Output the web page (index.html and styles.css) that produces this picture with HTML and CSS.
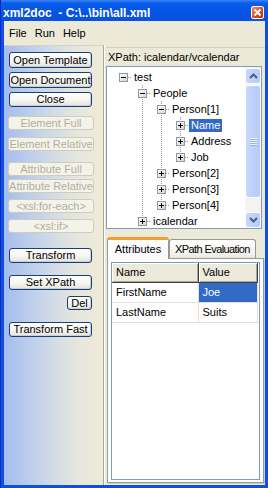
FILE: index.html
```html
<!DOCTYPE html>
<html lang="en">
<head>
    <meta charset="UTF-8">
    <title>xml2doc</title>
    <link rel="stylesheet" href="styles.css">
</head>
<body>
    <div class="window">
        <div class="titlebar">
            <span class="title">xml2doc  - C:\..\bin\all.xml</span>
            <span class="close-btn">
                <svg width="11" height="11" viewBox="0 0 11 11"><path d="M2.5 2.5 L8.5 8.5 M8.5 2.5 L2.5 8.5" stroke="#fff" stroke-width="1.8" fill="none"/></svg>
            </span>
        </div>

        <div class="frame">
            <nav class="menubar">
                <span>File</span>
                <span>Run</span>
                <span>Help</span>
            </nav>

            <div class="client">
                <div class="toolpanel">
                    <button class="btn tall">Open Template</button>
                    <button class="btn tall gap-4">Open Document</button>
                    <button class="btn gap-4">Close</button>
                    <button class="btn off gap-9" disabled>Element Full</button>
                    <button class="btn off gap-7" disabled>Element Relative</button>
                    <button class="btn off gap-11" disabled>Attribute Full</button>
                    <button class="btn off gap-3" disabled>Attribute Relative</button>
                    <button class="btn off gap-6" disabled>&lt;xsl:for-each&gt;</button>
                    <button class="btn off gap-6" disabled>&lt;xsl:if&gt;</button>
                    <button class="btn gap-15">Transform</button>
                    <button class="btn gap-12">Set XPath</button>
                    <button class="btn small gap-6">Del</button>
                    <button class="btn gap-12">Transform Fast</button>
                </div>

                <div class="splitter"></div>

                <div class="main">
                    <div class="xpath-bar">XPath: icalendar/vcalendar</div>

                    <div class="tree">
                        <div class="tree-view">
                            <ul class="nodes">
                                <li class="node root">
                                    <div class="row"><span class="exp"></span><span class="dash"></span><span class="label">test</span></div>
                                    <ul class="nodes">
                                        <li class="node">
                                            <div class="row"><span class="exp"></span><span class="dash"></span><span class="label">People</span></div>
                                            <ul class="nodes">
                                                <li class="node">
                                                    <div class="row"><span class="exp"></span><span class="dash"></span><span class="label">Person[1]</span></div>
                                                    <ul class="nodes">
                                                        <li class="node">
                                                            <div class="row"><span class="exp plus"></span><span class="dash"></span><span class="label selected">Name</span></div>
                                                        </li>
                                                        <li class="node">
                                                            <div class="row"><span class="exp plus"></span><span class="dash"></span><span class="label">Address</span></div>
                                                        </li>
                                                        <li class="node last">
                                                            <div class="row"><span class="exp plus"></span><span class="dash"></span><span class="label">Job</span></div>
                                                        </li>
                                                    </ul>
                                                </li>
                                                <li class="node">
                                                    <div class="row"><span class="exp plus"></span><span class="dash"></span><span class="label">Person[2]</span></div>
                                                </li>
                                                <li class="node">
                                                    <div class="row"><span class="exp plus"></span><span class="dash"></span><span class="label">Person[3]</span></div>
                                                </li>
                                                <li class="node last">
                                                    <div class="row"><span class="exp plus"></span><span class="dash"></span><span class="label">Person[4]</span></div>
                                                </li>
                                            </ul>
                                        </li>
                                        <li class="node last">
                                            <div class="row"><span class="exp plus"></span><span class="dash"></span><span class="label">icalendar</span></div>
                                        </li>
                                    </ul>
                                </li>
                            </ul>
                        </div>

                        <div class="vscroll">
                            <span class="sb-btn">
                                <svg width="9" height="6" viewBox="0 0 9 6"><path d="M1 5 L4.5 1.5 L8 5" stroke="#4d6185" stroke-width="2" fill="none"/></svg>
                            </span>
                            <span class="sb-thumb"></span>
                            <span class="sb-track"></span>
                            <span class="sb-btn">
                                <svg width="9" height="6" viewBox="0 0 9 6"><path d="M1 1 L4.5 4.5 L8 1" stroke="#4d6185" stroke-width="2" fill="none"/></svg>
                            </span>
                        </div>
                    </div>

                    <div class="tabs">
                        <span class="tab active">Attributes</span>
                        <span class="tab eval">XPath Evaluation</span>
                    </div>

                    <div class="tab-panel">
                        <div class="listview">
                            <table>
                                <thead>
                                    <tr><th class="col-name">Name</th><th class="col-value">Value</th><th class="col-fill"></th></tr>
                                </thead>
                                <tbody>
                                    <tr><td>FirstName</td><td class="picked">Joe</td><td></td></tr>
                                    <tr><td>LastName</td><td>Suits</td><td></td></tr>
                                </tbody>
                            </table>
                        </div>
                    </div>
                </div>
            </div>
        </div>
    </div>
</body>
</html>
```

FILE: styles.css
```css
body {
    margin: 0;
    width: 268px;
    height: 488px;
    overflow: hidden;
    font-family: "Liberation Sans", Arial, sans-serif;
    font-size: 11px;
    color: #000;
}

.window {
    height: 488px;
    display: flex;
    flex-direction: column;
    background: #0a50e4;
    border-left: 1px solid #0028b8;
    box-sizing: border-box;
}

/* title bar */
.titlebar {
    height: 21px;
    flex: none;
    display: flex;
    align-items: center;
    justify-content: space-between;
    padding: 4px 4px 0 2px;
    box-sizing: border-box;
    background: linear-gradient(#3a86f7, #0b5ce9 3px, #0454e6 60%, #0a51de);
    color: #fff;
    font-weight: bold;
    font-size: 12px;
    white-space: pre;
}

.close-btn {
    width: 13px;
    height: 13px;
    box-sizing: border-box;
    border: 1px solid #fff;
    border-radius: 2px;
    background: linear-gradient(135deg, #f0906c, #d8461e 60%, #c33a14);
    display: flex;
    align-items: center;
    justify-content: center;
}

.close-btn svg {
    display: block;
}

.frame {
    flex: 1;
    display: flex;
    flex-direction: column;
    padding: 0 3px 3px 3px;
}

/* menu */
.menubar {
    height: 24px;
    flex: none;
    display: flex;
    align-items: center;
    padding-left: 1px;
    background: #ece9d8;
}

.menubar span {
    padding: 0 4px;
}

.client {
    flex: 1;
    display: flex;
    background: #ece9d8;
}

/* left tool panel */
.toolpanel {
    width: 100px;
    display: flex;
    flex-direction: column;
    align-items: flex-start;
    padding-top: 6px;
    box-sizing: border-box;
    border-top: 1px solid #d8d4c4;
    border-right: 1px solid #aca899;
    background: linear-gradient(to right, #a4bcee 0%, #b9cbed 22%, #d3dce6 50%, #e6e6dc 75%, #f0ebd8 100%);
}

.btn {
    display: block;
    width: 83px;
    height: 15px;
    margin-left: 5px;
    padding: 0;
    box-sizing: border-box;
    font-family: inherit;
    font-size: 11px;
    line-height: 13px;
    color: #000;
    border: 1px solid #1c3f73;
    border-radius: 3px;
    background: linear-gradient(#ffffff, #f6f5f1 55%, #e4e2da);
    box-shadow: inset -1px -1px 0 #c5cedb;
    white-space: nowrap;
}

.btn.tall {
    height: 16px;
}

.btn.off {
    width: 86px;
    height: 14px;
    margin-left: 4px;
    color: #b1ae9f;
    border-color: #cfccbd;
    background: #f4f3ea;
    box-shadow: none;
}

.btn.small {
    width: 25px;
    height: 14px;
    margin-left: 63px;
}

.gap-3 { margin-top: 3px; }
.gap-4 { margin-top: 4px; }
.gap-6 { margin-top: 6px; }
.gap-7 { margin-top: 7px; }
.gap-9 { margin-top: 9px; }
.gap-11 { margin-top: 11px; }
.gap-12 { margin-top: 12px; }
.gap-15 { margin-top: 15px; }

.splitter {
    width: 2px;
    border-left: 1px solid #fff;
    box-sizing: border-box;
}

/* right side */
.main {
    flex: 1;
    min-width: 0;
    display: flex;
    flex-direction: column;
}

.xpath-bar {
    height: 19px;
    margin-top: 2px;
    line-height: 18px;
    padding-left: 2px;
    border-top: 1px solid #d6d2c2;
    box-sizing: border-box;
    white-space: nowrap;
}

.tree {
    height: 163px;
    margin-right: 3px;
    display: flex;
    box-sizing: border-box;
    border: 1px solid #7f9db9;
    background: #fff;
}

.tree-view {
    flex: 1;
    padding: 2px 0 0 12px;
    overflow: hidden;
}

.nodes {
    list-style: none;
    margin: 0;
    padding: 0;
}

.nodes .nodes {
    padding-left: 19px;
}

.node {
    background: repeating-linear-gradient(to bottom, #9a9a9a 0 1px, transparent 1px 2px) 4px 0 / 1px 100% no-repeat;
}

.node.last {
    background-size: 1px 8px;
}

.node.root {
    background: none;
}

.row {
    height: 16px;
    display: flex;
    align-items: center;
    white-space: nowrap;
}

.exp {
    width: 9px;
    height: 9px;
    flex: none;
    box-sizing: border-box;
    border: 1px solid #8e99a6;
    background:
        linear-gradient(#000, #000) center / 5px 1px no-repeat,
        linear-gradient(135deg, #ffffff, #d8d6cc);
}

.exp.plus {
    background:
        linear-gradient(#000, #000) center / 5px 1px no-repeat,
        linear-gradient(#000, #000) center / 1px 5px no-repeat,
        linear-gradient(135deg, #ffffff, #d8d6cc);
}

.dash {
    width: 4px;
    height: 1px;
    flex: none;
    background: repeating-linear-gradient(to right, #9a9a9a 0 1px, transparent 1px 2px);
}

.label {
    height: 13px;
    line-height: 13px;
    padding: 0 2px;
}

.label.selected {
    background: #316ac5;
    color: #fff;
}

/* scrollbar */
.vscroll {
    width: 16px;
    display: flex;
    flex-direction: column;
    padding-top: 1px;
    background: #f4f3ee;
}

.sb-btn {
    height: 16px;
    flex: none;
    display: flex;
    align-items: center;
    justify-content: center;
    box-sizing: border-box;
    border: 1px solid #fff;
    border-radius: 3px;
    background: linear-gradient(to right, #c8d7fc, #b6cbf7);
}

.sb-thumb {
    flex: 1;
    margin-top: 1px;
    box-sizing: border-box;
    border: 1px solid #fff;
    border-radius: 3px;
    background:
        repeating-linear-gradient(to bottom, #eef3fe 0 1px, #94b2ee 1px 2px) center / 7px 8px no-repeat,
        linear-gradient(to right, #c8d7fc, #b6cbf7);
}

.sb-track {
    height: 14px;
    flex: none;
}

/* tabs */
.tabs {
    height: 21px;
    margin-top: 8px;
    margin-left: 1px;
    display: flex;
    align-items: flex-end;
}

.tab {
    height: 19px;
    box-sizing: border-box;
    display: flex;
    align-items: center;
    justify-content: center;
    border: 1px solid #919b9c;
    border-bottom: none;
    border-radius: 3px 3px 0 0;
    background: linear-gradient(#ffffff, #f3f2ee 70%, #e8e7e1);
    white-space: nowrap;
}

.tab.active {
    position: relative;
    z-index: 1;
    width: 62px;
    height: 22px;
    margin-bottom: -1px;
    padding-bottom: 1px;
    border-top: 3px solid #f0a030;
    background: #fcfcfe;
}

.tab.eval {
    width: 87px;
    letter-spacing: -0.6px;
}

.tab-panel {
    flex: 1;
    margin: 0 1px 2px 1px;
    padding: 3px 3px 2px 3px;
    display: flex;
    box-sizing: border-box;
    border: 1px solid #919b9c;
    background: #fcfcfe;
    box-shadow: 1px 1px 0 #d0cfc6;
}

.listview {
    flex: 1;
    border: 1px solid #7f9db9;
    background: #fff;
}

.listview table {
    width: 100%;
    border-collapse: collapse;
    table-layout: fixed;
}

.listview th {
    height: 19px;
    padding: 0 0 0 4px;
    box-sizing: border-box;
    text-align: left;
    font-weight: normal;
    background: #ebeadb;
    border-right: 1px solid #404040;
    border-bottom: 1px solid #404040;
    box-shadow: inset 1px 1px 0 #fff, inset -1px -1px 0 #aca899;
}

.listview th.col-name {
    width: 86px;
}

.listview th.col-value {
    width: 59px;
}

.listview th.col-fill {
    border: none;
    box-shadow: none;
    background: #fff;
}

.listview td {
    height: 20px;
    padding: 0 0 0 4px;
    box-sizing: border-box;
    border-right: 1px solid #e2e0d8;
    border-bottom: 1px solid #e2e0d8;
}

.listview td:last-child {
    border: none;
}

.listview td.picked {
    background: #316ac5;
    color: #fff;
}
```
